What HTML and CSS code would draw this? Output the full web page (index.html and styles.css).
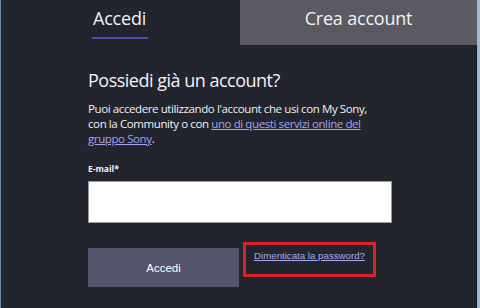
FILE: index.html
```html
<!DOCTYPE html>
<html lang="it">
<head>
<meta charset="UTF-8" />
<title>Accedi</title>
<link rel="stylesheet" href="styles.css">
</head>
<body>
  <div class="frame">
    <!-- Tabs -->
    <div class="tabs">
      <div class="tab tab-active"><span class="tab-label">Accedi</span></div>
      <div class="tab tab-other"><span class="tab-label">Crea account</span></div>
    </div>

    <!-- Login form -->
    <div class="content">
      <h1>Possiedi già un account?</h1>
      <p class="intro">Puoi accedere utilizzando l'account che usi con My Sony, con la Community o con <a href="#">uno di questi servizi online del gruppo Sony</a>.</p>

      <label class="field-label" for="email">E-mail*</label>
      <input class="field-input" id="email" type="text" />

      <div class="actions">
        <button class="btn-login">Accedi</button>
        <div class="forgot-box">
          <a href="#" class="forgot">Dimenticata la password?</a>
        </div>
      </div>
    </div>
  </div>
</body>
</html>
```

FILE: styles.css
```css
/* Base */
body {
  margin: 0;
  background: #22242e;
  font-family: 'Open Sans', 'Noto Sans', sans-serif;
  color: #f2f2f4;
}

.frame {
  height: 308px;
  border-left: 1px solid #6d8aa3;
  border-right: 3px solid #9dbcd2;
  box-shadow: inset -1px 0 0 #15161d;
  overflow: hidden;
}

/* Tabs */
.tabs {
  display: flex;
  height: 45px;
}
.tab {
  display: flex;
  justify-content: center;
  font-size: 18px;
  letter-spacing: -0.2px;
}
.tab-active {
  width: 239px;
}
.tab-active .tab-label {
  width: 56px;
  margin-left: -2px;
  padding-top: 6px;
  height: 31px;
  text-align: center;
  border-bottom: 2px solid #4b4fa8;
}
.tab-other {
  flex: 1;
  background: #5b5a63;
  padding-top: 6px;
}

/* Content */
.content {
  padding-left: 87px;
}
h1 {
  margin: 22px 0 0;
  font-size: 18px;
  font-weight: 400;
  letter-spacing: -0.5px;
  line-height: 26px;
}
.intro {
  margin: 8px 0 0;
  width: 286px;
  font-size: 11.5px;
  letter-spacing: -0.4px;
  line-height: 15px;
}
.intro a {
  color: #a6a6e8;
}

.field-label {
  display: block;
  margin-top: 17px;
  font-size: 8.5px;
  font-weight: 700;
}
.field-input {
  display: block;
  margin-top: 7px;
  width: 304px;
  height: 42px;
  box-sizing: border-box;
  border: 1px solid #9a9aa6;
  background: #ffffff;
}

.actions {
  display: flex;
  align-items: flex-start;
  margin-top: 25px;
}
.btn-login {
  width: 151px;
  height: 39px;
  border: none;
  background: #55546f;
  color: #ffffff;
  font-family: 'Liberation Sans', Arial, sans-serif;
  font-size: 11.5px;
}
.forgot-box {
  margin-left: 4px;
  margin-top: -6px;
  width: 127px;
  height: 24px;
  border: 3px solid #d8222c;
  display: flex;
  justify-content: center;
  padding-top: 5px;
}
.forgot {
  color: #a9a9ea;
  font-family: 'Liberation Sans', Arial, sans-serif;
  font-size: 9.7px;
}
```
